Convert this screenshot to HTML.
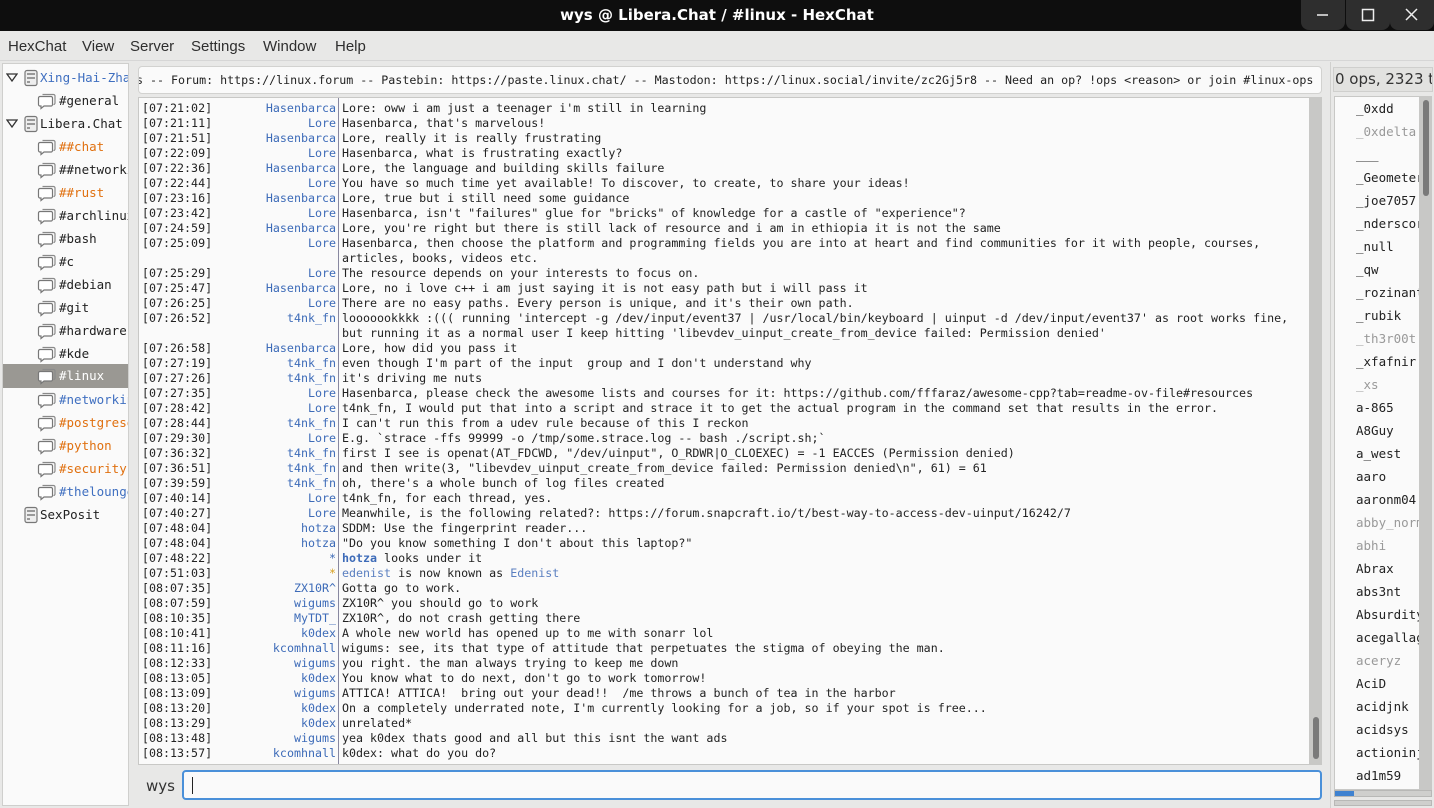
<!DOCTYPE html>
<html><head><meta charset="utf-8">
<style>
*{margin:0;padding:0;box-sizing:border-box}
body{width:1434px;height:808px;overflow:hidden;background:#e8e8e7;font-family:"DejaVu Sans Mono","Liberation Mono",monospace;position:relative}
.abs{position:absolute}
#title{left:0;top:0;width:1434px;height:31px;background:#0e0e0e;color:#fff;font:bold 15px "DejaVu Sans","Liberation Sans",sans-serif;text-align:center;line-height:31px}
.wb{top:0;width:44px;height:30px;background:#2e2e2e;border-radius:0 0 8px 8px;color:#eee;text-align:center}
#menu{left:0;top:31px;width:1434px;height:30px;background:#e8e8e7;font:15px "Liberation Sans","DejaVu Sans",sans-serif;color:#2e2e2e;border-bottom:1px solid #d6d6d6}
#menu span{position:absolute;top:7px}
#tree{left:2px;top:63px;width:127px;height:743px;background:#fafafa;border:1px solid #cfcfcd;overflow:hidden;font-size:12.5px;color:#222}
.tr{position:absolute;height:23px;line-height:23px;white-space:nowrap;left:0;width:125px}
.ic{position:absolute;top:3px;width:20px;height:18px}
.sv{position:absolute;top:3px;width:16px;height:18px}
.tri{position:absolute;left:3px;top:7px}
.or{color:#e0700f}.bl{color:#3f6fc0}
#topic{left:138px;top:66px;width:1184px;height:28px;background:#fafafa;border:1px solid #d2d2d0;border-radius:4px;font-size:11.65px;line-height:26px;white-space:nowrap;overflow:hidden;color:#222}
#chat{left:138px;top:97px;width:1172px;height:668px;background:#fafafa;border:1px solid #c8c8c6;overflow:hidden;font-size:11.65px;color:#222}
#sep{left:199px;top:0;width:1px;height:668px;background:#8888a0}
.ln{position:absolute;left:0;height:15px;line-height:15px;white-space:pre;width:1170px}
.t{position:absolute;left:3px}
.n{position:absolute;right:973px;color:#3d6bb8;text-align:right}
.m{position:absolute;left:203px}
#vs{left:1310px;top:97px;width:12px;height:668px;background:#c8c8c6}
#input{left:182px;top:770px;width:1140px;height:30px;background:#fafafa;border:2px solid #4a90d9;border-radius:4px}
#ul{left:1334px;top:96px;width:86px;height:694px;background:#fafafa;border:1px solid #c8c8c6;overflow:hidden;font-size:12.5px;color:#222}
.u{position:absolute;left:21px;height:23px;line-height:23px;white-space:nowrap}
.g{color:#999}
</style></head><body>
<svg width="0" height="0" style="position:absolute">
<defs>
<symbol id="bub" viewBox="0 0 20 18"><path d="M5.5 2.5h11a1.5 1.5 0 0 1 1.5 1.5v7a1.5 1.5 0 0 1-1.5 1.5H17" fill="none" stroke="#8a8a8a" stroke-width="1.2"/><path d="M3 4.5h11a1.5 1.5 0 0 1 1.5 1.5v6.5a1.5 1.5 0 0 1-1.5 1.5H7l-3 2.5v-2.5H3a1.5 1.5 0 0 1-1.5-1.5V6A1.5 1.5 0 0 1 3 4.5z" fill="#fff" stroke="#777" stroke-width="1.2"/></symbol>
<symbol id="srv" viewBox="0 0 16 18"><rect x="2" y="1.5" width="12" height="15" rx="2" fill="#eee" stroke="#777" stroke-width="1.2"/><rect x="4" y="4" width="8" height="2" fill="#999"/><rect x="4" y="8" width="8" height="2" fill="#999"/><rect x="4" y="12" width="3" height="2" fill="#999"/></symbol>
</defs></svg>
<div id="title" class="abs">wys @ Libera.Chat / #linux - HexChat</div>
<div class="abs wb" style="left:1301px"><svg width="44" height="30"><line x1="16" y1="15" x2="27" y2="15" stroke="#eee" stroke-width="1.5"/></svg></div>
<div class="abs wb" style="left:1346px"><svg width="44" height="30"><rect x="16.5" y="9.5" width="11" height="11" fill="none" stroke="#eee" stroke-width="1.5"/></svg></div>
<div class="abs wb" style="left:1390px"><svg width="44" height="30"><path d="M16 9L27 20M27 9L16 20" stroke="#eee" stroke-width="1.5"/></svg></div>
<div id="menu" class="abs"><span style="left:8px">HexChat</span><span style="left:82px">View</span><span style="left:130px">Server</span><span style="left:191px">Settings</span><span style="left:263px">Window</span><span style="left:335px">Help</span></div>
<div id="tree" class="abs">
<div class="tr" style="top:2px"><svg class="tri" width="12" height="9"><path d="M1 1h10L6 8z" fill="none" stroke="#333" stroke-width="1.3"/></svg><svg class="sv" style="left:20px"><use href="#srv"/></svg><span class="bl" style="position:absolute;left:37px">Xing-Hai-Zhang</span></div>
<div class="tr" style="top:25px"><svg class="ic" style="left:34px"><use href="#bub"/></svg><span style="position:absolute;left:56px">#general</span></div>
<div class="tr" style="top:48px"><svg class="tri" width="12" height="9"><path d="M1 1h10L6 8z" fill="none" stroke="#333" stroke-width="1.3"/></svg><svg class="sv" style="left:20px"><use href="#srv"/></svg><span style="position:absolute;left:37px">Libera.Chat</span></div>
<div class="tr" style="top:71px"><svg class="ic" style="left:34px"><use href="#bub"/></svg><span class="or" style="position:absolute;left:56px">##chat</span></div>
<div class="tr" style="top:94px"><svg class="ic" style="left:34px"><use href="#bub"/></svg><span style="position:absolute;left:56px">##networking</span></div>
<div class="tr" style="top:117px"><svg class="ic" style="left:34px"><use href="#bub"/></svg><span class="or" style="position:absolute;left:56px">##rust</span></div>
<div class="tr" style="top:140px"><svg class="ic" style="left:34px"><use href="#bub"/></svg><span style="position:absolute;left:56px">#archlinux</span></div>
<div class="tr" style="top:163px"><svg class="ic" style="left:34px"><use href="#bub"/></svg><span style="position:absolute;left:56px">#bash</span></div>
<div class="tr" style="top:186px"><svg class="ic" style="left:34px"><use href="#bub"/></svg><span style="position:absolute;left:56px">#c</span></div>
<div class="tr" style="top:209px"><svg class="ic" style="left:34px"><use href="#bub"/></svg><span style="position:absolute;left:56px">#debian</span></div>
<div class="tr" style="top:232px"><svg class="ic" style="left:34px"><use href="#bub"/></svg><span style="position:absolute;left:56px">#git</span></div>
<div class="tr" style="top:255px"><svg class="ic" style="left:34px"><use href="#bub"/></svg><span style="position:absolute;left:56px">#hardware</span></div>
<div class="tr" style="top:278px"><svg class="ic" style="left:34px"><use href="#bub"/></svg><span style="position:absolute;left:56px">#kde</span></div>
<div class="tr" style="top:300px;background:#9a9893;height:24px"><svg class="ic" style="left:34px"><use href="#bub"/></svg><span style="position:absolute;left:56px;color:#fff">#linux</span></div>
<div class="tr" style="top:324px"><svg class="ic" style="left:34px"><use href="#bub"/></svg><span class="bl" style="position:absolute;left:56px">#networking</span></div>
<div class="tr" style="top:347px"><svg class="ic" style="left:34px"><use href="#bub"/></svg><span class="or" style="position:absolute;left:56px">#postgresql</span></div>
<div class="tr" style="top:370px"><svg class="ic" style="left:34px"><use href="#bub"/></svg><span class="or" style="position:absolute;left:56px">#python</span></div>
<div class="tr" style="top:393px"><svg class="ic" style="left:34px"><use href="#bub"/></svg><span class="or" style="position:absolute;left:56px">#security</span></div>
<div class="tr" style="top:416px"><svg class="ic" style="left:34px"><use href="#bub"/></svg><span class="bl" style="position:absolute;left:56px">#thelounge</span></div>
<div class="tr" style="top:439px"><svg class="sv" style="left:20px"><use href="#srv"/></svg><span style="position:absolute;left:37px">SexPosit</span></div>
</div>
<div id="topic" class="abs"><span style="position:relative;left:-3px">s -- Forum: https://linux.forum -- Pastebin: https://paste.linux.chat/ -- Mastodon: https://linux.social/invite/zc2Gj5r8 -- Need an op? !ops &lt;reason&gt; or join #linux-ops</span></div>
<div id="chat" class="abs">
<div id="sep" class="abs"></div>
<div class="ln" style="top:3px"><span class="t">[07:21:02]</span><span class="n">Hasenbarca</span><span class="m">Lore: oww i am just a teenager i'm still in learning</span></div>
<div class="ln" style="top:18px"><span class="t">[07:21:11]</span><span class="n">Lore</span><span class="m">Hasenbarca, that's marvelous!</span></div>
<div class="ln" style="top:33px"><span class="t">[07:21:51]</span><span class="n">Hasenbarca</span><span class="m">Lore, really it is really frustrating</span></div>
<div class="ln" style="top:48px"><span class="t">[07:22:09]</span><span class="n">Lore</span><span class="m">Hasenbarca, what is frustrating exactly?</span></div>
<div class="ln" style="top:63px"><span class="t">[07:22:36]</span><span class="n">Hasenbarca</span><span class="m">Lore, the language and building skills failure</span></div>
<div class="ln" style="top:78px"><span class="t">[07:22:44]</span><span class="n">Lore</span><span class="m">You have so much time yet available! To discover, to create, to share your ideas!</span></div>
<div class="ln" style="top:93px"><span class="t">[07:23:16]</span><span class="n">Hasenbarca</span><span class="m">Lore, true but i still need some guidance</span></div>
<div class="ln" style="top:108px"><span class="t">[07:23:42]</span><span class="n">Lore</span><span class="m">Hasenbarca, isn't "failures" glue for "bricks" of knowledge for a castle of "experience"?</span></div>
<div class="ln" style="top:123px"><span class="t">[07:24:59]</span><span class="n">Hasenbarca</span><span class="m">Lore, you're right but there is still lack of resource and i am in ethiopia it is not the same</span></div>
<div class="ln" style="top:138px"><span class="t">[07:25:09]</span><span class="n">Lore</span><span class="m">Hasenbarca, then choose the platform and programming fields you are into at heart and find communities for it with people, courses,</span></div>
<div class="ln" style="top:153px"><span class="m">articles, books, videos etc.</span></div>
<div class="ln" style="top:168px"><span class="t">[07:25:29]</span><span class="n">Lore</span><span class="m">The resource depends on your interests to focus on.</span></div>
<div class="ln" style="top:183px"><span class="t">[07:25:47]</span><span class="n">Hasenbarca</span><span class="m">Lore, no i love c++ i am just saying it is not easy path but i will pass it</span></div>
<div class="ln" style="top:198px"><span class="t">[07:26:25]</span><span class="n">Lore</span><span class="m">There are no easy paths. Every person is unique, and it's their own path.</span></div>
<div class="ln" style="top:213px"><span class="t">[07:26:52]</span><span class="n">t4nk_fn</span><span class="m">looooookkkk :((( running 'intercept -g /dev/input/event37 | /usr/local/bin/keyboard | uinput -d /dev/input/event37' as root works fine,</span></div>
<div class="ln" style="top:228px"><span class="m">but running it as a normal user I keep hitting 'libevdev_uinput_create_from_device failed: Permission denied'</span></div>
<div class="ln" style="top:243px"><span class="t">[07:26:58]</span><span class="n">Hasenbarca</span><span class="m">Lore, how did you pass it</span></div>
<div class="ln" style="top:258px"><span class="t">[07:27:19]</span><span class="n">t4nk_fn</span><span class="m">even though I'm part of the input  group and I don't understand why</span></div>
<div class="ln" style="top:273px"><span class="t">[07:27:26]</span><span class="n">t4nk_fn</span><span class="m">it's driving me nuts</span></div>
<div class="ln" style="top:288px"><span class="t">[07:27:35]</span><span class="n">Lore</span><span class="m">Hasenbarca, please check the awesome lists and courses for it: https://github.com/fffaraz/awesome-cpp?tab=readme-ov-file#resources</span></div>
<div class="ln" style="top:303px"><span class="t">[07:28:42]</span><span class="n">Lore</span><span class="m">t4nk_fn, I would put that into a script and strace it to get the actual program in the command set that results in the error.</span></div>
<div class="ln" style="top:318px"><span class="t">[07:28:44]</span><span class="n">t4nk_fn</span><span class="m">I can't run this from a udev rule because of this I reckon</span></div>
<div class="ln" style="top:333px"><span class="t">[07:29:30]</span><span class="n">Lore</span><span class="m">E.g. `strace -ffs 99999 -o /tmp/some.strace.log -- bash ./script.sh;`</span></div>
<div class="ln" style="top:348px"><span class="t">[07:36:32]</span><span class="n">t4nk_fn</span><span class="m">first I see is openat(AT_FDCWD, "/dev/uinput", O_RDWR|O_CLOEXEC) = -1 EACCES (Permission denied)</span></div>
<div class="ln" style="top:363px"><span class="t">[07:36:51]</span><span class="n">t4nk_fn</span><span class="m">and then write(3, "libevdev_uinput_create_from_device failed: Permission denied\n", 61) = 61</span></div>
<div class="ln" style="top:378px"><span class="t">[07:39:59]</span><span class="n">t4nk_fn</span><span class="m">oh, there's a whole bunch of log files created</span></div>
<div class="ln" style="top:393px"><span class="t">[07:40:14]</span><span class="n">Lore</span><span class="m">t4nk_fn, for each thread, yes.</span></div>
<div class="ln" style="top:408px"><span class="t">[07:40:27]</span><span class="n">Lore</span><span class="m">Meanwhile, is the following related?: https://forum.snapcraft.io/t/best-way-to-access-dev-uinput/16242/7</span></div>
<div class="ln" style="top:423px"><span class="t">[07:48:04]</span><span class="n">hotza</span><span class="m">SDDM: Use the fingerprint reader...</span></div>
<div class="ln" style="top:438px"><span class="t">[07:48:04]</span><span class="n">hotza</span><span class="m">"Do you know something I don't about this laptop?"</span></div>
<div class="ln" style="top:453px"><span class="t">[07:48:22]</span><span class="n">*</span><span class="m"><b style="color:#3d6bb8">hotza</b> looks under it</span></div>
<div class="ln" style="top:468px"><span class="t">[07:51:03]</span><span class="n" style="color:#d8a020">*</span><span class="m"><span style="color:#5a7fc0">edenist</span> is now known as <span style="color:#5a7fc0">Edenist</span></span></div>
<div class="ln" style="top:483px"><span class="t">[08:07:35]</span><span class="n">ZX10R^</span><span class="m">Gotta go to work.</span></div>
<div class="ln" style="top:498px"><span class="t">[08:07:59]</span><span class="n">wigums</span><span class="m">ZX10R^ you should go to work</span></div>
<div class="ln" style="top:513px"><span class="t">[08:10:35]</span><span class="n">MyTDT_</span><span class="m">ZX10R^, do not crash getting there</span></div>
<div class="ln" style="top:528px"><span class="t">[08:10:41]</span><span class="n">k0dex</span><span class="m">A whole new world has opened up to me with sonarr lol</span></div>
<div class="ln" style="top:543px"><span class="t">[08:11:16]</span><span class="n">kcomhnall</span><span class="m">wigums: see, its that type of attitude that perpetuates the stigma of obeying the man.</span></div>
<div class="ln" style="top:558px"><span class="t">[08:12:33]</span><span class="n">wigums</span><span class="m">you right. the man always trying to keep me down</span></div>
<div class="ln" style="top:573px"><span class="t">[08:13:05]</span><span class="n">k0dex</span><span class="m">You know what to do next, don't go to work tomorrow!</span></div>
<div class="ln" style="top:588px"><span class="t">[08:13:09]</span><span class="n">wigums</span><span class="m">ATTICA! ATTICA!  bring out your dead!!  /me throws a bunch of tea in the harbor</span></div>
<div class="ln" style="top:603px"><span class="t">[08:13:20]</span><span class="n">k0dex</span><span class="m">On a completely underrated note, I'm currently looking for a job, so if your spot is free...</span></div>
<div class="ln" style="top:618px"><span class="t">[08:13:29]</span><span class="n">k0dex</span><span class="m">unrelated*</span></div>
<div class="ln" style="top:633px"><span class="t">[08:13:48]</span><span class="n">wigums</span><span class="m">yea k0dex thats good and all but this isnt the want ads</span></div>
<div class="ln" style="top:648px"><span class="t">[08:13:57]</span><span class="n">kcomhnall</span><span class="m">k0dex: what do you do?</span></div>
</div>
<div id="vs" class="abs"><div class="abs" style="left:3px;top:620px;width:6px;height:42px;background:#7a7a7a;border-radius:3px"></div></div>
<div class="abs" style="left:146px;top:777px;font:15px 'DejaVu Sans','Liberation Sans',sans-serif;color:#333">wys</div>
<div id="input" class="abs"><div class="abs" style="left:8px;top:5px;width:1px;height:17px;background:#222"></div></div>
<div class="abs" style="left:1330px;top:62px;width:1px;height:746px;background:#d0d0ce"></div>
<div class="abs" style="left:1333px;top:67px;width:100px;height:25px;background:#e2e2e0;border:1px solid #cfcfcd;font:15px 'DejaVu Sans','Liberation Sans',sans-serif;color:#333;line-height:23px;white-space:nowrap;overflow:hidden;padding-left:1px">0 ops, 2323 total</div>
<div id="ul" class="abs">
<div class="u" style="top:0px">_0xdd</div>
<div class="u g" style="top:23px">_0xdelta</div>
<div class="u" style="top:46px">___</div>
<div class="u" style="top:69px">_Geometer</div>
<div class="u" style="top:92px">_joe7057</div>
<div class="u" style="top:115px">_nderscore</div>
<div class="u" style="top:138px">_null</div>
<div class="u" style="top:161px">_qw</div>
<div class="u" style="top:184px">_rozinante</div>
<div class="u" style="top:207px">_rubik</div>
<div class="u g" style="top:230px">_th3r00t</div>
<div class="u" style="top:253px">_xfafnir</div>
<div class="u g" style="top:276px">_xs</div>
<div class="u" style="top:299px">a-865</div>
<div class="u" style="top:322px">A8Guy</div>
<div class="u" style="top:345px">a_west</div>
<div class="u" style="top:368px">aaro</div>
<div class="u" style="top:391px">aaronm04</div>
<div class="u g" style="top:414px">abby_norm</div>
<div class="u g" style="top:437px">abhi</div>
<div class="u" style="top:460px">Abrax</div>
<div class="u" style="top:483px">abs3nt</div>
<div class="u" style="top:506px">Absurdity</div>
<div class="u" style="top:529px">acegallag</div>
<div class="u g" style="top:552px">aceryz</div>
<div class="u" style="top:575px">AciD</div>
<div class="u" style="top:598px">acidjnk</div>
<div class="u" style="top:621px">acidsys</div>
<div class="u" style="top:644px">actioninj</div>
<div class="u" style="top:667px">ad1m59</div>
</div>
<div class="abs" style="left:1420px;top:96px;width:12px;height:694px;background:#c8c8c6"><div class="abs" style="left:3px;top:4px;width:6px;height:96px;background:#7a7a7a;border-radius:3px"></div></div>
<div class="abs" style="left:1334px;top:790px;width:98px;height:7px;background:#cfcfcd;border:1px solid #b8b8b6"><div class="abs" style="left:0;top:0;width:19px;height:5px;background:#3f82d0"></div></div>
<div class="abs" style="left:1334px;top:800px;width:98px;height:6px;background:#cfcfcd;border:1px solid #b8b8b6"></div>
</body></html>
